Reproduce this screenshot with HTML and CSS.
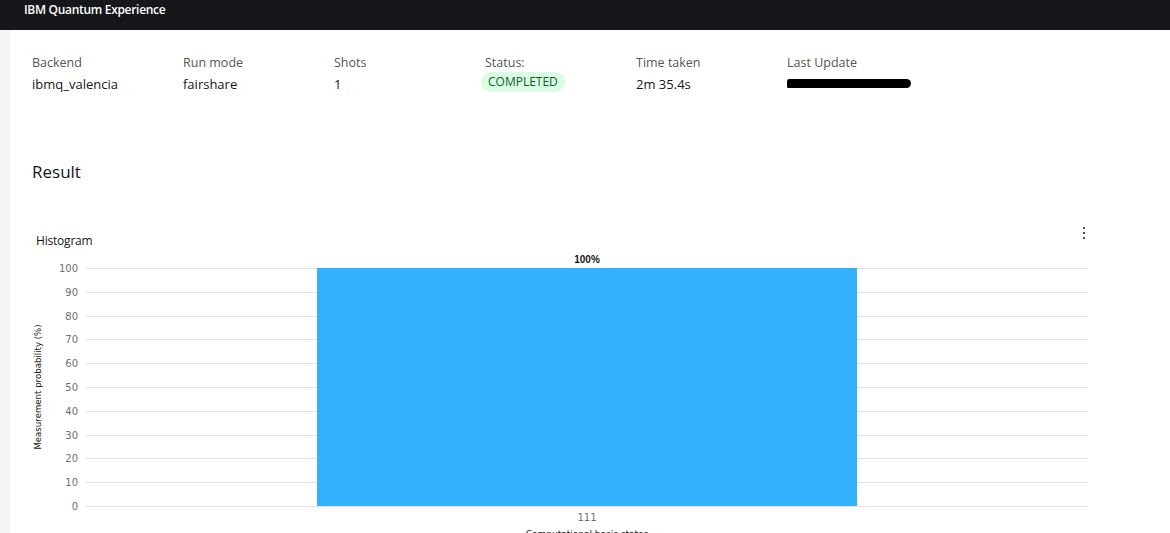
FILE: index.html
```html
<!DOCTYPE html>
<html>
<head>
<meta charset="utf-8">
<link rel="stylesheet" href="styles.css">
</head>
<body>
<header class="topbar"><span class="brand">IBM Quantum Experience</span></header>
<div class="layout">
  <aside class="rail"></aside>
  <main class="content">
    <section class="info">
      <div class="field"><div class="label">Backend</div><div class="value">ibmq_valencia</div></div>
      <div class="field"><div class="label">Run mode</div><div class="value">fairshare</div></div>
      <div class="field"><div class="label">Shots</div><div class="value">1</div></div>
      <div class="field"><div class="label">Status:</div><div class="value"><span class="tag">COMPLETED</span></div></div>
      <div class="field"><div class="label">Time taken</div><div class="value">2m 35.4s</div></div>
      <div class="field"><div class="label">Last Update</div><div class="value"><span class="redacted"></span></div></div>
    </section>
    <h2 class="result">Result</h2>
    <section class="chart">
      <div class="chart-head">
        <span class="chart-title">Histogram</span>
        <span class="kebab"><i></i><i></i><i></i></span>
      </div>
      <svg class="plot" width="1160" height="290" viewBox="0 0 1160 290">
        <g stroke="#e0e0e0" stroke-width="1">
          <line x1="76" x2="1078" y1="18.5" y2="18.5"/>
          <line x1="76" x2="1078" y1="42.5" y2="42.5"/>
          <line x1="76" x2="1078" y1="66.5" y2="66.5"/>
          <line x1="76" x2="1078" y1="89.5" y2="89.5"/>
          <line x1="76" x2="1078" y1="113.5" y2="113.5"/>
          <line x1="76" x2="1078" y1="137.5" y2="137.5"/>
          <line x1="76" x2="1078" y1="161.5" y2="161.5"/>
          <line x1="76" x2="1078" y1="185.5" y2="185.5"/>
          <line x1="76" x2="1078" y1="208.5" y2="208.5"/>
          <line x1="76" x2="1078" y1="232.5" y2="232.5"/>
          <line x1="76" x2="1078" y1="256.5" y2="256.5"/>
        </g>
        <g class="ticks" text-anchor="end">
          <text x="68" y="22">100</text>
          <text x="68" y="46">90</text>
          <text x="68" y="70">80</text>
          <text x="68" y="93">70</text>
          <text x="68" y="117">60</text>
          <text x="68" y="141">50</text>
          <text x="68" y="165">40</text>
          <text x="68" y="189">30</text>
          <text x="68" y="212">20</text>
          <text x="68" y="236">10</text>
          <text x="68" y="260">0</text>
        </g>
        <text class="ytitle" transform="translate(31 137) rotate(-90)" text-anchor="middle">Measurement probability (%)</text>
        <rect x="307" y="18" width="540" height="238" fill="#33b1ff"/>
        <text class="barlabel" x="577" y="13" text-anchor="middle">100%</text>
        <text class="ticks" x="577" y="271" text-anchor="middle">111</text>
        <text class="xtitle" x="577" y="287" text-anchor="middle">Computational basis states</text>
      </svg>
    </section>
  </main>
</div>
</body>
</html>
```
FILE: styles.css
```css
html, body {
  margin: 0;
  padding: 0;
  background: #ffffff;
  font-family: "Open Sans", "Noto Sans", sans-serif;
  overflow: hidden;
}
.topbar {
  height: 30px;
  background: #15171a;
  display: flex;
  align-items: center;
  padding-left: 24px;
  padding-bottom: 12px;
  box-sizing: border-box;
}
.brand {
  color: #ffffff;
  font-size: 12px;
  font-weight: 600;
  letter-spacing: -0.3px;
}
.layout {
  display: flex;
  min-height: 503px;
}
.rail {
  width: 10px;
  background: #f2f4f8;
  flex: none;
}
.content {
  flex: 1;
  min-width: 0;
}
.info {
  display: grid;
  grid-template-columns: repeat(6, 151px);
  padding: 24px 0 0 22px;
}
.label {
  font-size: 12.5px;
  color: #565656;
  line-height: 17px;
}
.value {
  font-size: 13px;
  color: #161616;
  line-height: 18px;
  margin-top: 3px;
  height: 20px;
  display: flex;
  align-items: center;
}
.tag {
  background: #dafbe4;
  color: #0e6027;
  font-size: 12px;
  border-radius: 10px;
  padding: 0 7px;
  line-height: 20px;
  margin-left: -4px;
  margin-top: -4px;
}
.redacted {
  display: block;
  width: 124px;
  height: 9px;
  margin-top: -2px;
  background: #000;
  border-radius: 3px 6px 6px 2px;
}
.result {
  margin: 66px 0 0 22px;
  font-size: 17px;
  font-weight: 400;
  color: #161616;
  line-height: 24px;
}
.chart {
  margin-top: 46px;
}
.chart-head {
  display: flex;
  justify-content: space-between;
  align-items: center;
  padding: 0 85px 0 26px;
  height: 20px;
}
.chart-title {
  font-size: 12px;
  color: #161616;
  letter-spacing: -0.2px;
}
.kebab {
  display: flex;
  flex-direction: column;
  gap: 3px;
  margin-top: -14px;
}
.kebab i {
  display: block;
  width: 2px;
  height: 2px;
  background: #161616;
  border-radius: 1px;
}
.plot {
  display: block;
}
.ticks {
  font-family: "DejaVu Sans", sans-serif;
  font-size: 10px;
  fill: #6f6f6f;
}
.ytitle {
  font-family: "DejaVu Sans", sans-serif;
  font-size: 8.6px;
  fill: #161616;
}
.barlabel {
  font-family: "Liberation Sans", sans-serif;
  font-size: 10px;
  font-weight: 700;
  fill: #161616;
}
.xtitle {
  font-family: "DejaVu Sans", sans-serif;
  font-size: 9px;
  fill: #161616;
}
```
